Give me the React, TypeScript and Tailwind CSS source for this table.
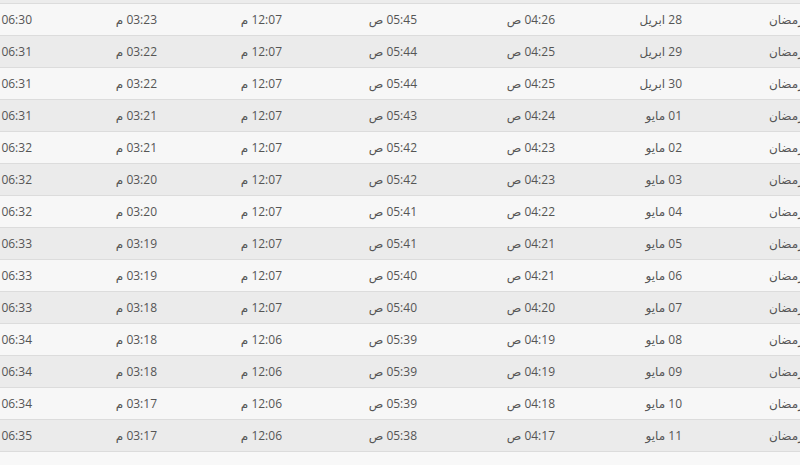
import React from 'react';

type Row = { hijri: string; date: string; fajr: string; sunrise: string; dhuhr: string; asr: string; maghrib: string };

const rows: Row[] = [
  { hijri: 'رمضان', date: '28 ابريل', fajr: '04:26 ص', sunrise: '05:45 ص', dhuhr: '12:07 م', asr: '03:23 م', maghrib: '06:30' },
  { hijri: 'رمضان', date: '29 ابريل', fajr: '04:25 ص', sunrise: '05:44 ص', dhuhr: '12:07 م', asr: '03:22 م', maghrib: '06:31' },
  { hijri: 'رمضان', date: '30 ابريل', fajr: '04:25 ص', sunrise: '05:44 ص', dhuhr: '12:07 م', asr: '03:22 م', maghrib: '06:31' },
  { hijri: 'رمضان', date: '01 مايو', fajr: '04:24 ص', sunrise: '05:43 ص', dhuhr: '12:07 م', asr: '03:21 م', maghrib: '06:31' },
  { hijri: 'رمضان', date: '02 مايو', fajr: '04:23 ص', sunrise: '05:42 ص', dhuhr: '12:07 م', asr: '03:21 م', maghrib: '06:32' },
  { hijri: 'رمضان', date: '03 مايو', fajr: '04:23 ص', sunrise: '05:42 ص', dhuhr: '12:07 م', asr: '03:20 م', maghrib: '06:32' },
  { hijri: 'رمضان', date: '04 مايو', fajr: '04:22 ص', sunrise: '05:41 ص', dhuhr: '12:07 م', asr: '03:20 م', maghrib: '06:32' },
  { hijri: 'رمضان', date: '05 مايو', fajr: '04:21 ص', sunrise: '05:41 ص', dhuhr: '12:07 م', asr: '03:19 م', maghrib: '06:33' },
  { hijri: 'رمضان', date: '06 مايو', fajr: '04:21 ص', sunrise: '05:40 ص', dhuhr: '12:07 م', asr: '03:19 م', maghrib: '06:33' },
  { hijri: 'رمضان', date: '07 مايو', fajr: '04:20 ص', sunrise: '05:40 ص', dhuhr: '12:07 م', asr: '03:18 م', maghrib: '06:33' },
  { hijri: 'رمضان', date: '08 مايو', fajr: '04:19 ص', sunrise: '05:39 ص', dhuhr: '12:06 م', asr: '03:18 م', maghrib: '06:34' },
  { hijri: 'رمضان', date: '09 مايو', fajr: '04:19 ص', sunrise: '05:39 ص', dhuhr: '12:06 م', asr: '03:18 م', maghrib: '06:34' },
  { hijri: 'رمضان', date: '10 مايو', fajr: '04:18 ص', sunrise: '05:39 ص', dhuhr: '12:06 م', asr: '03:17 م', maghrib: '06:34' },
  { hijri: 'رمضان', date: '11 مايو', fajr: '04:17 ص', sunrise: '05:38 ص', dhuhr: '12:06 م', asr: '03:17 م', maghrib: '06:35' },
];

export default function App() {
  return (
    <div className="w-full h-screen overflow-hidden bg-[#f8f8f8] font-['Open_Sans','DejaVu_Sans',sans-serif] text-[12px] text-[#555]" dir="rtl">
      {/* tail of the previous row */}
      <div className="h-[3px] bg-[#ececec]" />
      {rows.map((r, i) => (
        <div
          key={r.date}
          className={`grid grid-cols-[122px_127px_138px_135px_125px_125px_1fr] items-center h-[32px] mr-[-4px] border-t border-[#dcdcdc] ${i % 2 === 0 ? 'bg-[#f7f7f7]' : 'bg-[#ebebeb]'}`}
        >
          <div className="whitespace-nowrap">{r.hijri}</div>
          <div className="whitespace-nowrap">{r.date}</div>
          <div className="whitespace-nowrap">{r.fajr}</div>
          <div className="whitespace-nowrap">{r.sunrise}</div>
          <div className="whitespace-nowrap">{r.dhuhr}</div>
          <div className="whitespace-nowrap">{r.asr}</div>
          <div className="whitespace-nowrap">{r.maghrib}</div>
        </div>
      ))}
      <div className="border-t border-[#dcdcdc]" />
    </div>
  );
}
